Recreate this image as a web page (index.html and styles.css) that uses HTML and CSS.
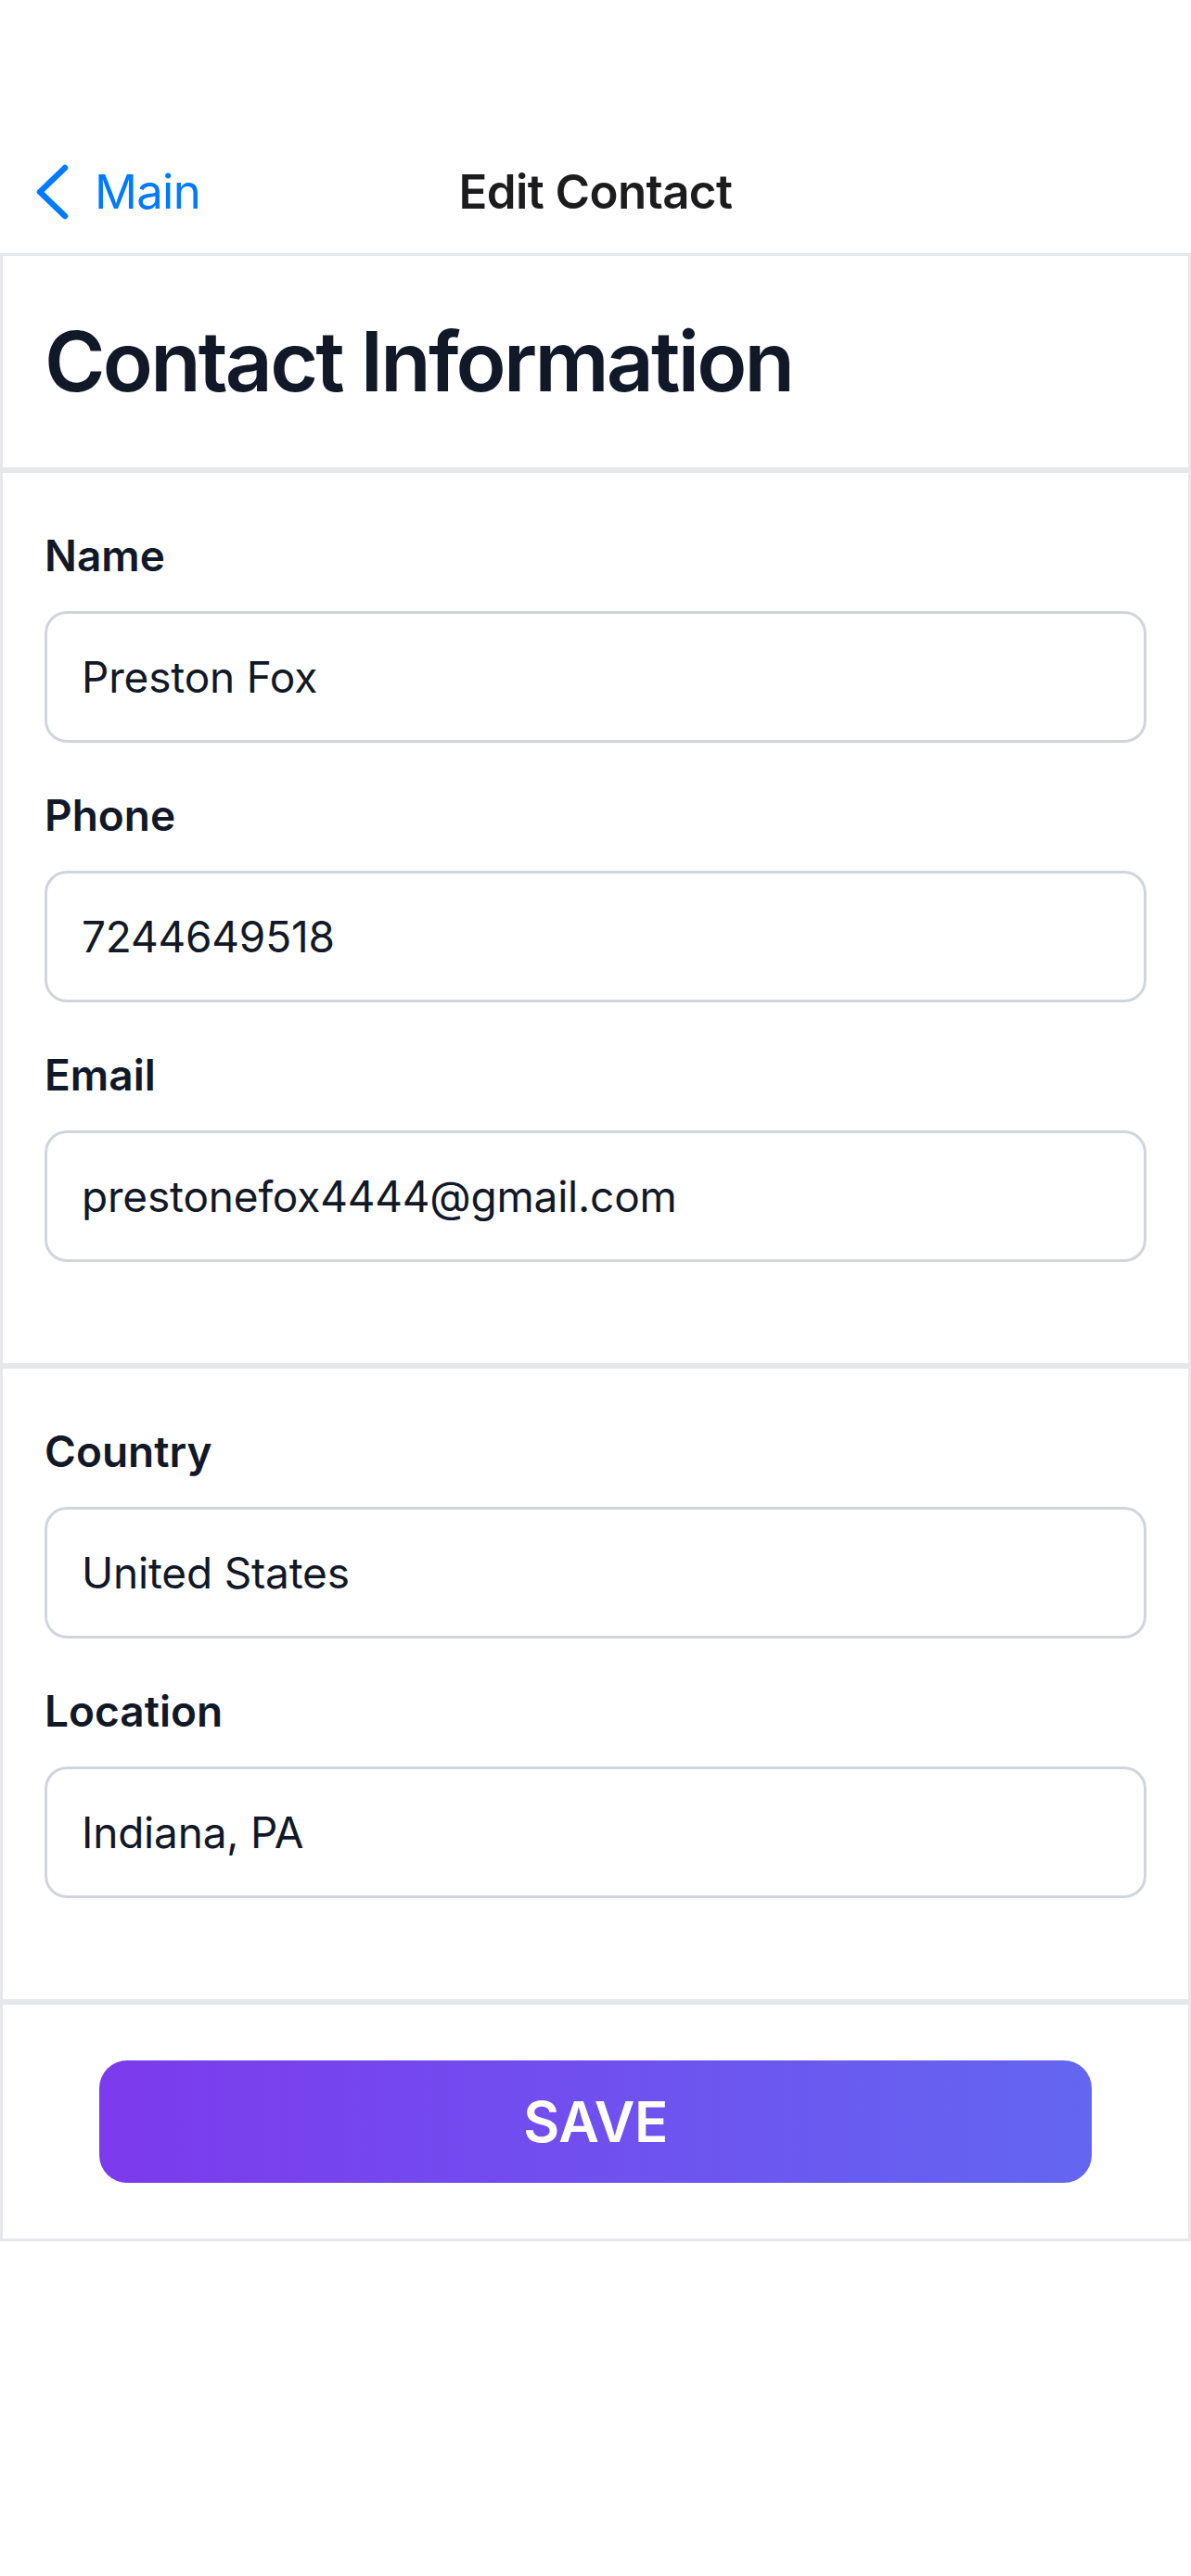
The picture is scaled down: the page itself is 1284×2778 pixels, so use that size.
FILE: index.html
```html
<!DOCTYPE html>
<html lang="en">
<head>
<meta charset="utf-8">
<title>Edit Contact</title>
<link rel="stylesheet" href="styles.css">
</head>
<body>
<div class="screen">
  <div class="status-space"></div>
  <header class="navbar">
    <a class="back" href="#">
      <svg class="chevron" width="36" height="60" viewBox="0 0 36 60" aria-hidden="true">
        <polyline points="31,4 4,30 31,56" fill="none" stroke="#007aff" stroke-width="6.5" stroke-linecap="round" stroke-linejoin="round"/>
      </svg>
      <span class="back-label">Main</span>
    </a>
    <div class="nav-title">Edit Contact</div>
    <div class="nav-right"></div>
  </header>

  <main class="card">
    <section class="section section-head">
      <h1 class="title">Contact Information</h1>
    </section>

    <section class="section section-fields">
      <div class="field">
        <label class="label">Name</label>
        <input class="input" type="text" value="Preston Fox">
      </div>
      <div class="field">
        <label class="label">Phone</label>
        <input class="input" type="text" value="7244649518">
      </div>
      <div class="field">
        <label class="label">Email</label>
        <input class="input" type="text" value="prestonefox4444@gmail.com">
      </div>
    </section>

    <section class="section section-fields">
      <div class="field">
        <label class="label">Country</label>
        <input class="input" type="text" value="United States">
      </div>
      <div class="field">
        <label class="label">Location</label>
        <input class="input" type="text" value="Indiana, PA">
      </div>
    </section>

    <section class="section section-actions">
      <button class="save" type="button">SAVE</button>
    </section>
  </main>
</div>
</body>
</html>
```

FILE: styles.css
```css
* {
  box-sizing: border-box;
}

html, body {
  margin: 0;
  padding: 0;
  background: #ffffff;
}

body {
  font-family: Inter, "Noto Sans", "Liberation Sans", sans-serif;
  color: #111827;
  width: 1284px;
  min-height: 2778px;
}

.screen {
  display: flex;
  flex-direction: column;
}

.status-space {
  height: 141px;
}

.navbar {
  height: 132px;
  display: grid;
  grid-template-columns: 1fr auto 1fr;
  align-items: center;
}

.back {
  display: flex;
  align-items: center;
  text-decoration: none;
  padding-left: 39px;
  color: #007aff;
}

.chevron {
  display: block;
  margin-right: 27px;
}

.back-label {
  font-size: 51px;
  font-weight: 400;
  line-height: 60px;
  color: #007aff;
  letter-spacing: -0.8px;
}

.nav-title {
  font-size: 51px;
  font-weight: 600;
  line-height: 60px;
  color: #1c1c1e;
  letter-spacing: -0.6px;
}

.card {
  display: flex;
  flex-direction: column;
}

.section {
  border: 3px solid #e5e7eb;
  background: #ffffff;
}

.section-head {
  padding: 60px 45px;
}

.title {
  margin: 0;
  font-size: 89px;
  line-height: 108px;
  font-weight: 600;
  color: #111827;
  letter-spacing: -2.8px;
}

.section-fields {
  padding: 62px 45px 109px;
  display: flex;
  flex-direction: column;
  gap: 51px;
}

.field {
  display: flex;
  flex-direction: column;
}

.label {
  font-size: 46px;
  line-height: 54px;
  font-weight: 600;
  color: #111827;
  margin-bottom: 33px;
}

.input {
  display: block;
  width: 100%;
  height: 142px;
  border: 3px solid #d1d5db;
  border-radius: 24px;
  padding: 0 36px 0 37px;
  font-family: Inter, "Noto Sans", "Liberation Sans", sans-serif;
  font-size: 46px;
  font-weight: 400;
  color: #111827;
  background: #ffffff;
  outline: none;
  letter-spacing: -0.2px;
}

.section-actions {
  padding: 60px 104px;
}

.save {
  display: block;
  width: 100%;
  height: 132px;
  border: none;
  border-radius: 30px;
  background: linear-gradient(to right, #7c3aed, #6366f1);
  color: #ffffff;
  font-family: Inter, "Noto Sans", "Liberation Sans", sans-serif;
  font-size: 60px;
  font-weight: 600;
  letter-spacing: -0.5px;
  cursor: pointer;
}
```
